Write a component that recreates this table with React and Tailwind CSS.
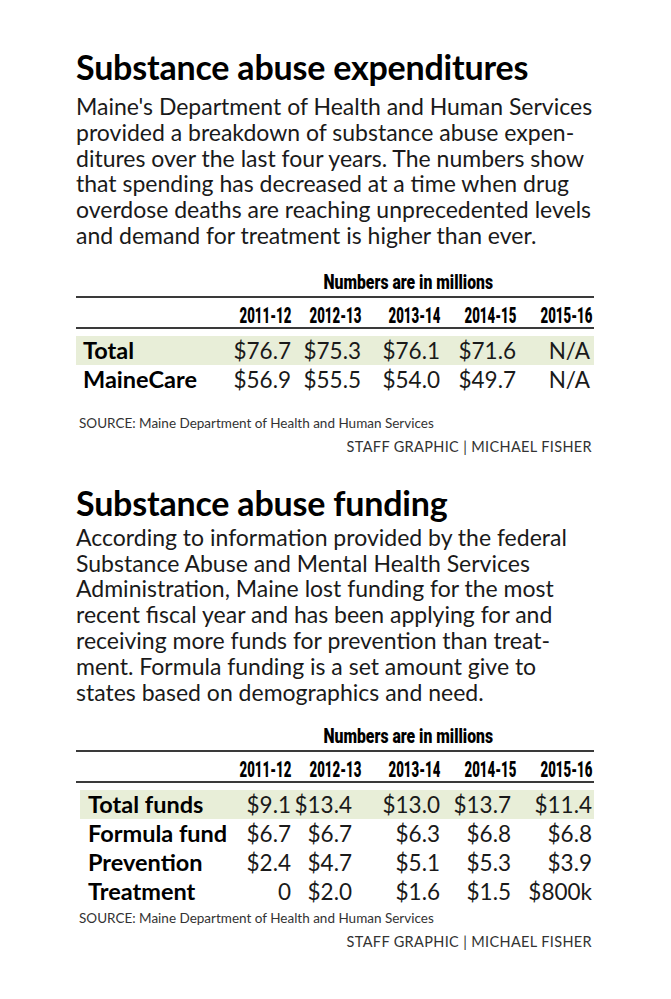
const body = "font-['Lato','Open_Sans',sans-serif]"
const cond = "font-['Roboto','Liberation_Sans',sans-serif]"

const years = ['2011-12', '2012-13', '2013-14', '2014-15', '2015-16']

const spending = [
  { label: 'Total', values: ['$76.7', '$75.3', '$76.1', '$71.6', 'N/A'], shaded: true },
  { label: 'MaineCare', values: ['$56.9', '$55.5', '$54.0', '$49.7', 'N/A'] },
]

const funding = [
  { label: 'Total funds', values: ['$9.1', '$13.4', '$13.0', '$13.7', '$11.4'], shaded: true },
  { label: 'Formula fund', values: ['$6.7', '$6.7', '$6.3', '$6.8', '$6.8'] },
  { label: 'Prevention', values: ['$2.4', '$4.7', '$5.1', '$5.3', '$3.9'] },
  { label: 'Treatment', values: ['0', '$2.0', '$1.6', '$1.5', '$800k'] },
]

const cols = 'grid grid-cols-[154px_61px_70px_79px_76px_78px]'
// same columns, but the shading starts 4px in from the rules
const insetCols = 'grid grid-cols-[150px_61px_70px_79px_76px_78px] pl-[4px] bg-clip-content'

function DataTable({ rows, valuePad, labelPad, insetLabelPad, inset }) {
  return (
    <div>
      <div className="h-[20px] leading-[20px] text-right pr-[101px]">
        <span className={`${cond} inline-block origin-right scale-x-[0.75] font-black text-[21px] text-black whitespace-nowrap`}>
          Numbers are in millions
        </span>
      </div>
      <div className={`${cols} border-y-2 border-[#3a3a3a] h-[33px] pt-[6px] leading-[23px] mt-[4px]`}>
        <span />
        {years.map((y) => (
          <span key={y} className="flex justify-end whitespace-nowrap last:pr-[2px]">
            <span className={`${cond} inline-block origin-right scale-x-[0.6] font-black text-[22px] text-black`}>
              {y}
            </span>
          </span>
        ))}
      </div>
      <div className="mt-[7px]">
        {rows.map((row) => {
          const shadedInset = row.shaded && inset
          return (
            <div
              key={row.label}
              className={`${shadedInset ? insetCols : cols} h-[29px] leading-[29px] ${row.shaded ? 'bg-[#e8eed8]' : ''}`}
            >
              <span className={`${body} font-bold text-[23.5px] text-black whitespace-nowrap ${shadedInset ? insetLabelPad : labelPad}`}>
                {row.label}
              </span>
              {row.values.map((v, i) => (
                <span
                  key={i}
                  className={`${body} text-[22.5px] text-[#1a1a1a] text-right whitespace-nowrap ${valuePad[i]}`}
                >
                  {v}
                </span>
              ))}
            </div>
          )
        })}
      </div>
    </div>
  )
}

function Credits({ gap }) {
  return (
    <div className={`${body} text-[#333]`}>
      <div className={`text-[13.5px] leading-[18px] pl-[3px] ${gap}`}>
        SOURCE: Maine Department of Health and Human Services
      </div>
      <div className="text-[14.5px] leading-[18px] text-right tracking-[0.35px] mt-[6px] pr-[2px]">
        STAFF GRAPHIC | MICHAEL FISHER
      </div>
    </div>
  )
}

function Paragraph({ lines, gap }) {
  return (
    <p className={`${body} text-[23px] leading-[25.8px] text-[#1a1a1a] ${gap}`}>
      {lines.map((l) => (
        <span key={l} className="block whitespace-nowrap">{l}</span>
      ))}
    </p>
  )
}

export default function App() {
  return (
    <div className="min-h-screen w-[671px] bg-white pl-[76px] pt-[47px]">
      <div className="w-[518px]">
        <h1 className={`${body} font-bold text-[34px] leading-[40px] text-black tracking-[-0.2px]`}>
          Substance abuse expenditures
        </h1>
        <Paragraph
          gap="mt-[7px]"
          lines={[
            "Maine's Department of Health and Human Services",
            'provided a breakdown of substance abuse expen-',
            'ditures over the last four years. The numbers show',
            'that spending has decreased at a time when drug',
            'overdose deaths are reaching unprecedented levels',
            'and demand for treatment is higher than ever.',
          ]}
        />
        <div className="mt-[23px]">
          <DataTable
            rows={spending}
            labelPad="pl-[7px]"
            valuePad={['', '', '', '', 'pr-[4px]']}
          />
        </div>
        <Credits gap="mt-[20px]" />

        <h1 className={`${body} font-bold text-[34px] leading-[40px] text-black tracking-[-0.2px] mt-[27px]`}>
          Substance abuse funding
        </h1>
        <Paragraph
          gap="mt-[2px]"
          lines={[
            'According to information provided by the federal',
            'Substance Abuse and Mental Health Services',
            'Administration, Maine lost funding for the most',
            'recent fiscal year and has been applying for and',
            'receiving more funds for prevention than treat-',
            'ment. Formula funding is a set amount give to',
            'states based on demographics and need.',
          ]}
        />
        <div className="mt-[21px]">
          <DataTable
            rows={funding}
            inset
            labelPad="pl-[12px]"
            insetLabelPad="pl-[8px]"
            valuePad={['', 'pr-[9px]', '', 'pr-[5px]', 'pr-[2px]']}
          />
        </div>
        <Credits gap="mt-[3px]" />
      </div>
    </div>
  )
}
